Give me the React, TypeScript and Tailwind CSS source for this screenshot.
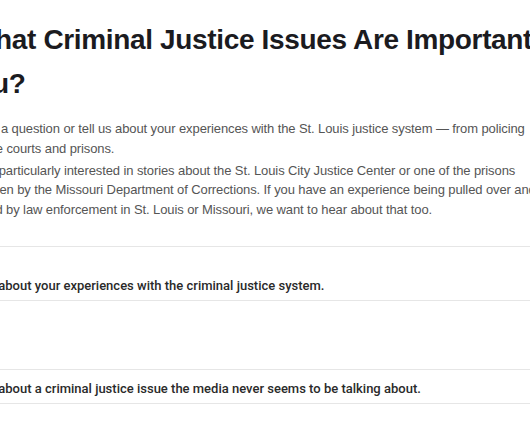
import React from 'react';

const headingLines = [
  { text: 'What Criminal Justice Issues Are Important to', shift: 'ml-[-31px]' },
  { text: 'you?', shift: 'ml-[-40px]' },
];

const introLines = [
  [
    { text: 'Ask a question or tell us about your experiences with the St. Louis justice system — from policing', shift: 'ml-[-24px]' },
    { text: 'to the courts and prisons.', shift: 'ml-[-29px]' },
  ],
  [
    { text: 'We’re particularly interested in stories about the St. Louis City Justice Center or one of the prisons', shift: 'ml-[-38px]' },
    { text: 'overseen by the Missouri Department of Corrections. If you have an experience being pulled over and', shift: 'ml-[-39px]' },
    { text: 'stopped by law enforcement in St. Louis or Missouri, we want to hear about that too.', shift: 'ml-[-43px]' },
  ],
];

const prompts = [
  { text: 'Tell us about your experiences with the criminal justice system.', box: 'pt-[29px] pb-[4px]' },
  { text: 'Tell us about a criminal justice issue the media never seems to be talking about.', box: 'mt-[68px] pt-[9px] pb-[4px]' },
];

export default function App() {
  return (
    <div
      className="w-[530px] h-[442px] overflow-hidden bg-white"
      style={{ fontFamily: '"Liberation Sans", Arial, sans-serif' }}
    >
      <div className="pt-[18px]">
        <h1 className="text-[28px] leading-[44px] font-bold tracking-[-0.35px] text-[#1b1b1f] whitespace-nowrap">
          {headingLines.map((l) => (
            <span key={l.text} className={`block ${l.shift}`}>
              {l.text}
            </span>
          ))}
        </h1>

        <div className="mt-[13px] text-[13px] leading-[19.5px] tracking-[-0.1px] text-[#555] whitespace-nowrap">
          {introLines.map((para, i) => (
            <p key={i} className={i > 0 ? 'mt-[2.5px]' : ''}>
              {para.map((l) => (
                <span key={l.text} className={`block ${l.shift}`}>
                  {l.text}
                </span>
              ))}
            </p>
          ))}
        </div>

        <div className="mt-[27px]">
          {prompts.map((p) => (
            <div
              key={p.text}
              className={`border-t border-b border-[#e6e6e6] ${p.box}`}
            >
              <div
                className="ml-[-43px] text-[13px] leading-[20px] font-medium text-[#2a2a2a] whitespace-nowrap"
                style={{ fontFamily: 'Roboto, "Liberation Sans", sans-serif' }}
              >
                {p.text}
              </div>
            </div>
          ))}
        </div>
      </div>
    </div>
  );
}
